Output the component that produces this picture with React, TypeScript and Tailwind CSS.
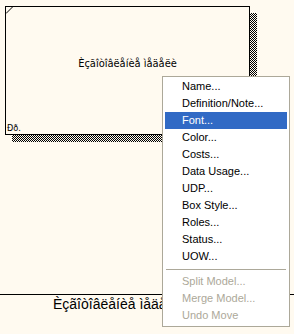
const items = [
  "Name...",
  "Definition/Note...",
  "Font...",
  "Color...",
  "Costs...",
  "Data Usage...",
  "UDP...",
  "Box Style...",
  "Roles...",
  "Status...",
  "UOW...",
];

const disabled = ["Split Model...", "Merge Model...", "Undo Move"];

export default function App() {
  const active = "Font...";

  return (
    <div className="relative w-[294px] h-[334px] overflow-hidden bg-[#fffaf0] font-['Liberation_Sans',Arial,sans-serif] text-black">
      {/* Entity box with hatched shadow */}
      <div className="pt-[6px] pl-[5px]">
        <div className="relative w-[245px] h-[129px]">
          <div className="absolute left-[7px] top-[7px] w-[245px] h-[129px] bg-[repeating-conic-gradient(#000_0%_25%,#fffaf0_0%_50%)] bg-[length:2px_2px]" />
          <div className="relative flex flex-col w-full h-full border border-black bg-[#fffaf0]">
            <svg className="absolute left-0 top-0" width="7" height="7" viewBox="0 0 7 7">
              <line x1="0" y1="6.5" x2="6.5" y2="0" stroke="#000" strokeWidth="1" />
            </svg>
            <div className="pt-[50px] text-center text-[11px] leading-[13px] font-['Liberation_Sans_Narrow','DejaVu_Sans_Condensed',sans-serif]">
              Èçãîòîâëåíèå ìåäåëè
            </div>
            <div className="mt-auto pl-[1px] pb-[1px] text-[9px] leading-[9px] font-['DejaVu_Sans_Condensed',sans-serif]">
              Ðð.
            </div>
          </div>
        </div>
      </div>

      {/* Relationship line + label */}
      <div className="mt-[159px] h-px bg-black" />
      <div className="mt-[1px] pl-[53px] text-[14px] leading-[16px] whitespace-nowrap">
        Èçãîòîâëåíèå ìåäåëè
      </div>

      {/* Context menu */}
      <div className="absolute left-[162px] top-[76px] w-[128px] border border-[#aca899] bg-white px-[2px] pt-[1px] pb-[2px] text-[11px]">
        {items.map((label) => (
          <div
            key={label}
            className={
              label === active
                ? "h-[17px] leading-[17px] pl-[17px] bg-[#316ac5] text-white whitespace-nowrap"
                : "h-[17px] leading-[17px] pl-[17px] whitespace-nowrap"
            }
          >
            {label}
          </div>
        ))}
        <div className="h-[8px] flex items-center px-[1px]">
          <div className="h-px w-full bg-[#aca899]" />
        </div>
        {disabled.map((label) => (
          <div key={label} className="h-[17px] leading-[17px] pl-[17px] text-[#aca899] whitespace-nowrap">
            {label}
          </div>
        ))}
      </div>
    </div>
  );
}
